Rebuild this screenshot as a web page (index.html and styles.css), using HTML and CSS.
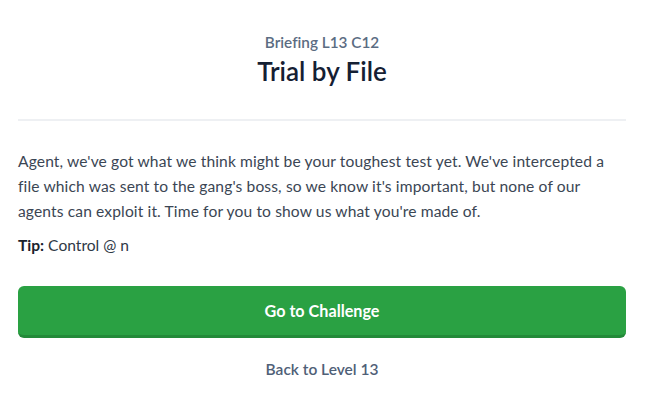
FILE: index.html
```html
<!DOCTYPE html>
<html>
<head>
<meta charset="utf-8">
<link rel="stylesheet" href="styles.css">
</head>
<body>
<div class="page">
  <header class="head">
    <div class="sub">Briefing L13 C12</div>
    <h1 class="title">Trial by File</h1>
  </header>
  <hr class="rule">
  <p class="text">Agent, we've got what we think might be your toughest test yet. We've intercepted a file which was sent to the gang's boss, so we know it's important, but none of our agents can exploit it. Time for you to show us what you're made of.</p>
  <p class="tip"><b>Tip:</b> Control @ n</p>
  <a class="btn">Go to Challenge</a>
  <a class="back">Back to Level 13</a>
</div>
</body>
</html>
```

FILE: styles.css
```css
* { box-sizing: border-box; }
body { margin: 0; background: #fff; font-family: Lato, "Liberation Sans", sans-serif; color: #3b4654; font-variant-ligatures: none; }
.page { padding: 0 20px 0 18px; }
.head { text-align: center; padding-top: 32px; }
.sub { font-size: 15.3px; font-weight: 600; color: #5b6c82; line-height: 20px; }
.title { margin: 4px 0 0; font-size: 26px; font-weight: 600; color: #152033; line-height: 30px; }
.rule { border: 0; border-top: 2px solid #eef0f3; margin: 33px 0 0; }
.text { margin: 28px 0 0; font-size: 15.6px; letter-spacing: 0.12px; line-height: 25px; color: #3b4654; }
.tip { margin: 9px 0 0; font-size: 15.6px; line-height: 25px; color: #2f3946; }
.tip b { font-weight: 700; color: #1a222d; }
.btn { display: flex; align-items: center; justify-content: center; margin-top: 28px; height: 52px; border-radius: 6px; background: #2aa143; border-bottom: 3px solid #238a39; color: #fff; font-weight: 700; font-size: 16.2px; }
.back { display: block; text-align: center; margin-top: 22px; font-size: 15.5px; font-weight: 600; color: #4f6077; }
```
